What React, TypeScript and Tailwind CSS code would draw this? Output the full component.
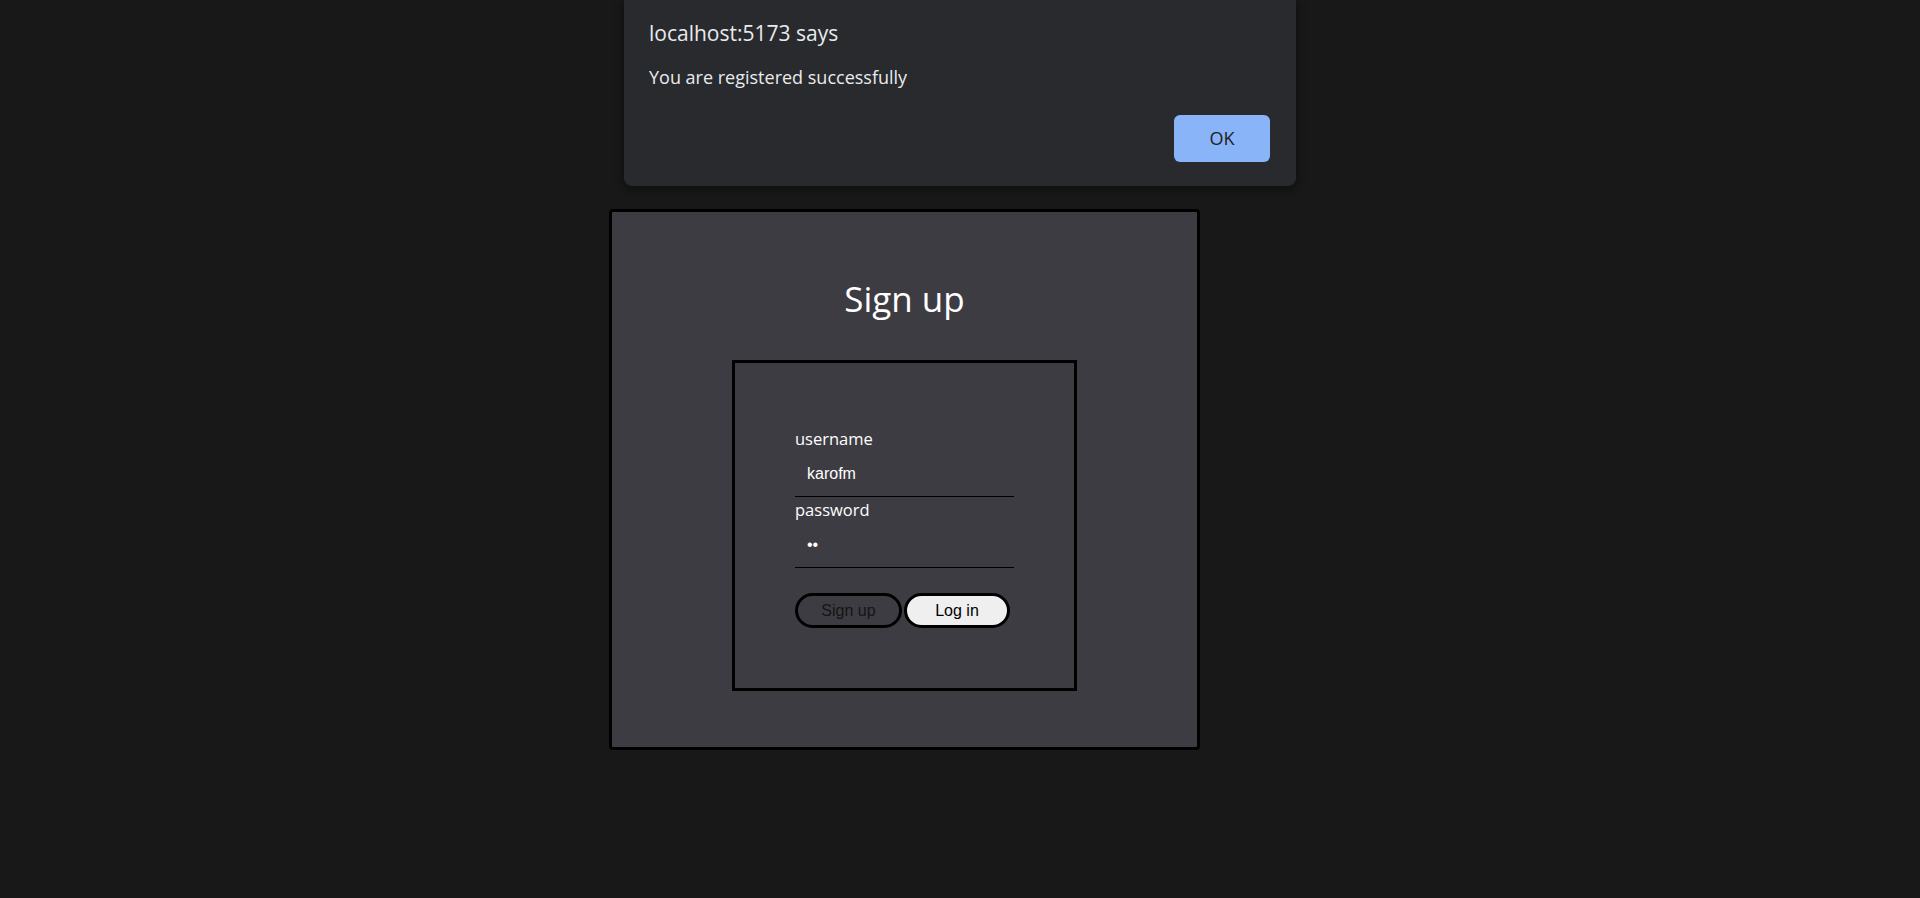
import { useState } from 'react';

const uiFont = "font-['Segoe_UI','Open_Sans','Noto_Sans',sans-serif]";
const arial = "font-['Liberation_Sans',Arial,sans-serif]";

export default function App() {
  const [username, setUsername] = useState('karofm');
  const [password, setPassword] = useState('ab');

  return (
    <div className={`min-h-screen bg-[#181818] relative ${uiFont}`}>
      {/* browser alert */}
      <div className="absolute left-[624px] top-0 w-[672px] h-[186px] bg-[#292a2d] rounded-b-[8px] shadow-[0_2px_8px_rgba(0,0,0,0.5)] px-[25px] pt-[18px] text-[#e8eaed]">
        <p className="text-[21px] leading-[30px]">localhost:5173 says</p>
        <p className="text-[18px] leading-[24px] mt-[17px]">You are registered successfully</p>
        <div className="flex justify-end mt-[26px] pr-[1px]">
          <button className="w-[96px] h-[47px] rounded-[6px] bg-[#8ab4f8] text-[#202124] text-[18px]">
            OK
          </button>
        </div>
      </div>

      <div className="pt-[209px] pl-[609px]">
        <div className="w-[591px] h-[541px] bg-[#3d3c42] border-[3px] border-black rounded-[4px] flex flex-col items-center pt-[64px]">
          <h1 className="text-[35px] leading-[45px] text-white">Sign up</h1>
          <div className="w-[345px] h-[331px] mt-[39px] border-[3px] border-black pl-[60px] pt-[64px]">
            <form className="w-[219px] flex flex-col" onSubmit={(e) => e.preventDefault()}>
              <label className="text-white text-[16.5px] leading-[24px]">username</label>
              <input
                value={username}
                onChange={(e) => setUsername(e.target.value)}
                className={`h-[46px] bg-transparent border-b border-black pl-[12px] text-white text-[16px] outline-none ${arial}`}
              />
              <label className="text-white text-[16.5px] leading-[24px] mt-[1px]">password</label>
              <input
                type="password"
                value={password}
                onChange={(e) => setPassword(e.target.value)}
                className={`h-[46px] bg-transparent border-b border-black pl-[12px] text-white text-[16px] outline-none ${arial}`}
              />
              <div className="flex gap-[2px] mt-[25px]">
                <button className={`w-[107px] h-[35px] rounded-full border-[3px] border-black text-[#141414] text-[16px] ${arial}`}>
                  Sign up
                </button>
                <button className={`w-[106px] h-[35px] rounded-full border-[3px] border-black bg-[#efefef] text-black text-[16px] ${arial}`}>
                  Log in
                </button>
              </div>
            </form>
          </div>
        </div>
      </div>
    </div>
  );
}
